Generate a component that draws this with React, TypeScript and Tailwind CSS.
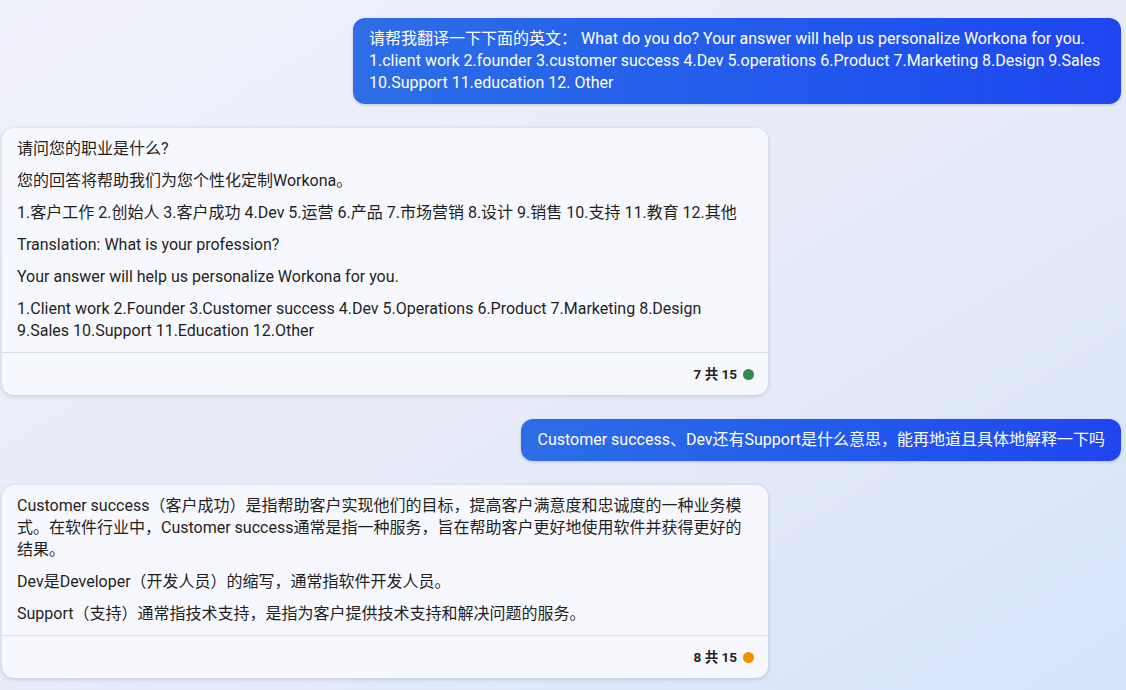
import React from 'react'

const font = { fontFamily: 'Roboto, "Noto Sans CJK SC", sans-serif' }

function UserBubble({ children }: { children: React.ReactNode }) {
  return (
    <div className="flex justify-end pr-[5px]">
      <div className="max-w-[768px] rounded-xl bg-gradient-to-r from-[#2d6ee6] to-[#1f45f0] px-4 py-[10px] text-[16px] leading-[22px] text-white shadow-[0_1px_3px_rgba(0,0,0,0.18)]">
        {children}
      </div>
    </div>
  )
}

function AssistantBubble({
  paras,
  index,
  dot,
}: {
  paras: string[]
  index: number
  dot: string
}) {
  return (
    <div className="flex pl-[2px]">
      <div className="w-[766px] rounded-xl bg-[#f7f8fd] text-[#1f1f1f] shadow-[0_1px_4px_rgba(0,0,0,0.16)]">
        <div className="px-[15px] pt-[10px] pb-[10px] text-[16px] leading-[22px] space-y-[10px]">
          {paras.map((p, i) => (
            <p key={i}>{p}</p>
          ))}
        </div>
        <div className="flex h-[43px] items-center justify-end gap-[6px] border-t border-[#dcdee6] pr-[14px] text-[13.5px] font-bold text-[#1f1f1f]">
          <span>{index} 共 15</span>
          <span className={`h-[11px] w-[11px] rounded-full ${dot}`} />
        </div>
      </div>
    </div>
  )
}

export default function App() {
  return (
    <div
      className="min-h-[690px] w-full overflow-hidden bg-gradient-to-br from-[#eff0fa] via-[#e8ecf9] to-[#d5e3fa] pt-[18px]"
      style={font}
    >
      <div className="flex flex-col gap-[24px]">
        <UserBubble>
          请帮我翻译一下下面的英文： What do you do? Your answer will help us personalize Workona for you.
          1.client work 2.founder 3.customer success 4.Dev 5.operations 6.Product 7.Marketing 8.Design 9.Sales
          10.Support 11.education 12. Other
        </UserBubble>
        <AssistantBubble
          index={7}
          dot="bg-[#2e8b4e]"
          paras={[
            '请问您的职业是什么?',
            '您的回答将帮助我们为您个性化定制Workona。',
            '1.客户工作 2.创始人 3.客户成功 4.Dev 5.运营 6.产品 7.市场营销 8.设计 9.销售 10.支持 11.教育 12.其他',
            'Translation: What is your profession?',
            'Your answer will help us personalize Workona for you.',
            '1.Client work 2.Founder 3.Customer success 4.Dev 5.Operations 6.Product 7.Marketing 8.Design 9.Sales 10.Support 11.Education 12.Other',
          ]}
        />
        <UserBubble>Customer success、Dev还有Support是什么意思，能再地道且具体地解释一下吗</UserBubble>
        <AssistantBubble
          index={8}
          dot="bg-[#f29100]"
          paras={[
            'Customer success（客户成功）是指帮助客户实现他们的目标，提高客户满意度和忠诚度的一种业务模式。在软件行业中，Customer success通常是指一种服务，旨在帮助客户更好地使用软件并获得更好的结果。',
            'Dev是Developer（开发人员）的缩写，通常指软件开发人员。',
            'Support（支持）通常指技术支持，是指为客户提供技术支持和解决问题的服务。',
          ]}
        />
      </div>
    </div>
  )
}
